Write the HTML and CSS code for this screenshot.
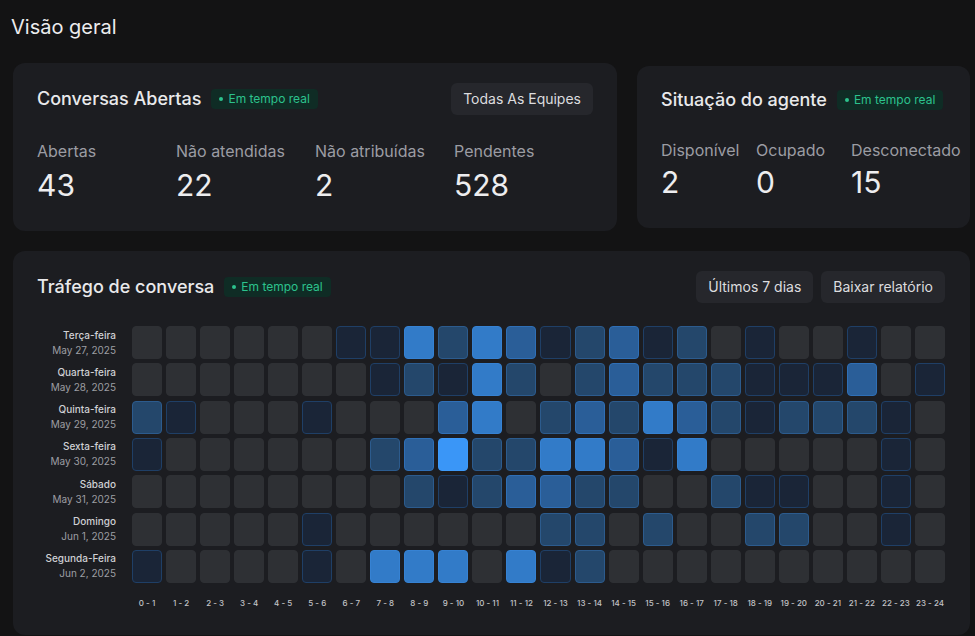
FILE: index.html
```html
<!DOCTYPE html>
<html lang="pt-BR">
<head>
<meta charset="utf-8">
<title>Visão geral</title>
<link rel="stylesheet" href="styles.css">
</head>
<body>
<main class="page">
  <h1 class="page-title">Visão geral</h1>

  <div class="top-row">
    <section class="card card-open">
      <div class="card-head">
        <h2 class="card-title">Conversas Abertas</h2>
        <span class="badge">Em tempo real</span>
        <button class="btn push">Todas As Equipes</button>
      </div>
      <div class="stats stats-4">
        <div><div class="stat-label">Abertas</div><div class="stat-value">43</div></div>
        <div><div class="stat-label">Não atendidas</div><div class="stat-value">22</div></div>
        <div><div class="stat-label">Não atribuídas</div><div class="stat-value">2</div></div>
        <div><div class="stat-label">Pendentes</div><div class="stat-value">528</div></div>
      </div>
    </section>

    <section class="card card-agents">
      <div class="card-head small">
        <h2 class="card-title">Situação do agente</h2>
        <span class="badge">Em tempo real</span>
      </div>
      <div class="stats stats-3">
        <div><div class="stat-label">Disponível</div><div class="stat-value">2</div></div>
        <div><div class="stat-label">Ocupado</div><div class="stat-value">0</div></div>
        <div><div class="stat-label">Desconectado</div><div class="stat-value">15</div></div>
      </div>
    </section>
  </div>

  <section class="card card-traffic">
    <div class="card-head">
      <h2 class="card-title">Tráfego de conversa</h2>
      <span class="badge">Em tempo real</span>
      <button class="btn push">Últimos 7 dias</button>
      <button class="btn">Baixar relatório</button>
    </div>

    <div class="heatmap">
      <div class="row-label"><span class="day">Terça-feira</span><span class="date">May 27, 2025</span></div>
      <div class="cell"></div><div class="cell"></div><div class="cell"></div><div class="cell"></div><div class="cell"></div><div class="cell"></div><div class="cell l1"></div><div class="cell l1"></div><div class="cell l4"></div><div class="cell l2"></div><div class="cell l4"></div><div class="cell l3"></div>
      <div class="cell l1"></div><div class="cell l2"></div><div class="cell l3"></div><div class="cell l1"></div><div class="cell l2"></div><div class="cell"></div><div class="cell l1"></div><div class="cell"></div><div class="cell"></div><div class="cell l1"></div><div class="cell"></div><div class="cell"></div>

      <div class="row-label"><span class="day">Quarta-feira</span><span class="date">May 28, 2025</span></div>
      <div class="cell"></div><div class="cell"></div><div class="cell"></div><div class="cell"></div><div class="cell"></div><div class="cell"></div><div class="cell"></div><div class="cell l1"></div><div class="cell l2"></div><div class="cell l1"></div><div class="cell l4"></div><div class="cell l2"></div>
      <div class="cell"></div><div class="cell l2"></div><div class="cell l3"></div><div class="cell l2"></div><div class="cell l2"></div><div class="cell l2"></div><div class="cell l1"></div><div class="cell l1"></div><div class="cell l1"></div><div class="cell l3"></div><div class="cell"></div><div class="cell l1"></div>

      <div class="row-label"><span class="day">Quinta-feira</span><span class="date">May 29, 2025</span></div>
      <div class="cell l2"></div><div class="cell l1"></div><div class="cell"></div><div class="cell"></div><div class="cell"></div><div class="cell l1"></div><div class="cell"></div><div class="cell"></div><div class="cell"></div><div class="cell l3"></div><div class="cell l4"></div><div class="cell"></div>
      <div class="cell l2"></div><div class="cell l3"></div><div class="cell l2"></div><div class="cell l4"></div><div class="cell l3"></div><div class="cell l2"></div><div class="cell l1"></div><div class="cell l2"></div><div class="cell l2"></div><div class="cell l2"></div><div class="cell l1"></div><div class="cell"></div>

      <div class="row-label"><span class="day">Sexta-feira</span><span class="date">May 30, 2025</span></div>
      <div class="cell l1"></div><div class="cell"></div><div class="cell"></div><div class="cell"></div><div class="cell"></div><div class="cell"></div><div class="cell"></div><div class="cell l2"></div><div class="cell l3"></div><div class="cell l5"></div><div class="cell l2"></div><div class="cell l2"></div>
      <div class="cell l4"></div><div class="cell l4"></div><div class="cell l3"></div><div class="cell l1"></div><div class="cell l4"></div><div class="cell"></div><div class="cell"></div><div class="cell"></div><div class="cell"></div><div class="cell"></div><div class="cell l1"></div><div class="cell"></div>

      <div class="row-label"><span class="day">Sábado</span><span class="date">May 31, 2025</span></div>
      <div class="cell"></div><div class="cell"></div><div class="cell"></div><div class="cell"></div><div class="cell"></div><div class="cell"></div><div class="cell"></div><div class="cell"></div><div class="cell l2"></div><div class="cell l1"></div><div class="cell l2"></div><div class="cell l3"></div>
      <div class="cell l3"></div><div class="cell l2"></div><div class="cell l2"></div><div class="cell"></div><div class="cell"></div><div class="cell l2"></div><div class="cell l1"></div><div class="cell l1"></div><div class="cell"></div><div class="cell"></div><div class="cell l1"></div><div class="cell"></div>

      <div class="row-label"><span class="day">Domingo</span><span class="date">Jun 1, 2025</span></div>
      <div class="cell"></div><div class="cell"></div><div class="cell"></div><div class="cell"></div><div class="cell"></div><div class="cell l1"></div><div class="cell"></div><div class="cell"></div><div class="cell"></div><div class="cell"></div><div class="cell"></div><div class="cell"></div>
      <div class="cell l2"></div><div class="cell l2"></div><div class="cell"></div><div class="cell l2"></div><div class="cell"></div><div class="cell"></div><div class="cell l2"></div><div class="cell l2"></div><div class="cell"></div><div class="cell"></div><div class="cell l1"></div><div class="cell"></div>

      <div class="row-label"><span class="day">Segunda-Feira</span><span class="date">Jun 2, 2025</span></div>
      <div class="cell l1"></div><div class="cell"></div><div class="cell"></div><div class="cell"></div><div class="cell"></div><div class="cell l1"></div><div class="cell"></div><div class="cell l4"></div><div class="cell l4"></div><div class="cell l4"></div><div class="cell"></div><div class="cell l4"></div>
      <div class="cell l1"></div><div class="cell l2"></div><div class="cell"></div><div class="cell"></div><div class="cell"></div><div class="cell"></div><div class="cell"></div><div class="cell"></div><div class="cell"></div><div class="cell"></div><div class="cell"></div><div class="cell"></div>

      <div class="axis-spacer"></div>
      <div class="hour">0 - 1</div><div class="hour">1 - 2</div><div class="hour">2 - 3</div><div class="hour">3 - 4</div><div class="hour">4 - 5</div><div class="hour">5 - 6</div><div class="hour">6 - 7</div><div class="hour">7 - 8</div><div class="hour">8 - 9</div><div class="hour">9 - 10</div><div class="hour">10 - 11</div><div class="hour">11 - 12</div>
      <div class="hour">12 - 13</div><div class="hour">13 - 14</div><div class="hour">14 - 15</div><div class="hour">15 - 16</div><div class="hour">16 - 17</div><div class="hour">17 - 18</div><div class="hour">18 - 19</div><div class="hour">19 - 20</div><div class="hour">20 - 21</div><div class="hour">21 - 22</div><div class="hour">22 - 23</div><div class="hour">23 - 24</div>
    </div>
  </section>
</main>
</body>
</html>
```

FILE: styles.css
```css
* { box-sizing: border-box; }

html, body {
  margin: 0;
  background: #131314;
}

body {
  font-family: Inter, "Noto Sans", "Liberation Sans", sans-serif;
  color: #ececee;
  overflow: hidden;
}

.page {
  padding: 13px 5px 0 13px;
}

.page-title {
  margin: 0 0 22px -2px;
  font-size: 20px;
  line-height: 28px;
  font-weight: 400;
  color: #ececee;
}

.top-row {
  display: flex;
  align-items: center;
  gap: 20px;
}

.card {
  background: #1c1d21;
  border-radius: 12px;
}

.card-open {
  width: 604px;
  padding: 20px 24px 28px;
}

.card-agents {
  flex: 1;
  min-width: 0;
  padding: 20px 24px 28px;
}

.card-traffic {
  margin-top: 20px;
  padding: 20px 25px 26px 24px;
}

.card-head {
  display: flex;
  align-items: center;
  height: 32px;
}

.card-head.small {
  height: 28px;
}

.card-title {
  margin: 0;
  font-size: 18px;
  line-height: 28px;
  font-weight: 500;
  color: #e9e9eb;
  white-space: nowrap;
}

.badge {
  display: inline-flex;
  align-items: center;
  gap: 5px;
  height: 20px;
  margin-left: 10px;
  padding: 0 8px;
  border-radius: 4px;
  background: #0f2c25;
  color: #2cc28d;
  font-size: 12px;
  line-height: 20px;
  white-space: nowrap;
}

.badge::before {
  content: "";
  width: 4px;
  height: 4px;
  border-radius: 50%;
  background: #2cc28d;
}

.btn {
  height: 32px;
  padding: 0 12px;
  border: none;
  border-radius: 6px;
  background: #26272c;
  color: #dcdcdf;
  font-family: inherit;
  font-size: 14px;
  line-height: 20px;
  white-space: nowrap;
}

.btn + .btn {
  margin-left: 8px;
}

.push {
  margin-left: auto;
}

.stats {
  display: grid;
  margin-top: 24px;
}

.stats-4 { grid-template-columns: repeat(4, minmax(0, 1fr)); }
.stats-3 { grid-template-columns: repeat(3, minmax(0, 1fr)); }

.stat-label {
  font-size: 16px;
  line-height: 24px;
  color: #9b9ca3;
  white-space: nowrap;
}

.stat-value {
  margin-top: 4px;
  font-size: 30px;
  line-height: 36px;
  color: #ededef;
}

.stats-3 .stat-value {
  margin-top: 2px;
}

.heatmap {
  display: grid;
  grid-template-columns: 91px repeat(24, minmax(0, 1fr));
  column-gap: 4px;
  row-gap: 4.33px;
  margin-top: 23px;
}

.row-label {
  display: flex;
  flex-direction: column;
  justify-content: center;
  align-items: flex-end;
  padding-right: 16px;
  margin-right: -4px;
  font-size: 10px;
  line-height: 15px;
  white-space: nowrap;
}

.day {
  font-weight: 500;
  color: #cfd0d4;
}

.date {
  color: #9c9da3;
}

.cell {
  height: 33px;
  border-radius: 4px;
  border: 1px solid #2e3034;
  background: #2e3034;
}

.cell.l1 { background: #1a2537; border-color: #1f3f66; }
.cell.l2 { background: #24476b; border-color: #2c5b8d; }
.cell.l3 { background: #2a5e98; border-color: #2f6fb6; }
.cell.l4 { background: #327bc8; border-color: #3682d3; }
.cell.l5 { background: #3a96f7; border-color: #3d9afa; }

.axis-spacer {
  margin-top: 10px;
}

.hour {
  margin-top: 10px;
  font-size: 8px;
  line-height: 12px;
  font-weight: 500;
  text-align: center;
  color: #c2c3c7;
  white-space: nowrap;
}
```
